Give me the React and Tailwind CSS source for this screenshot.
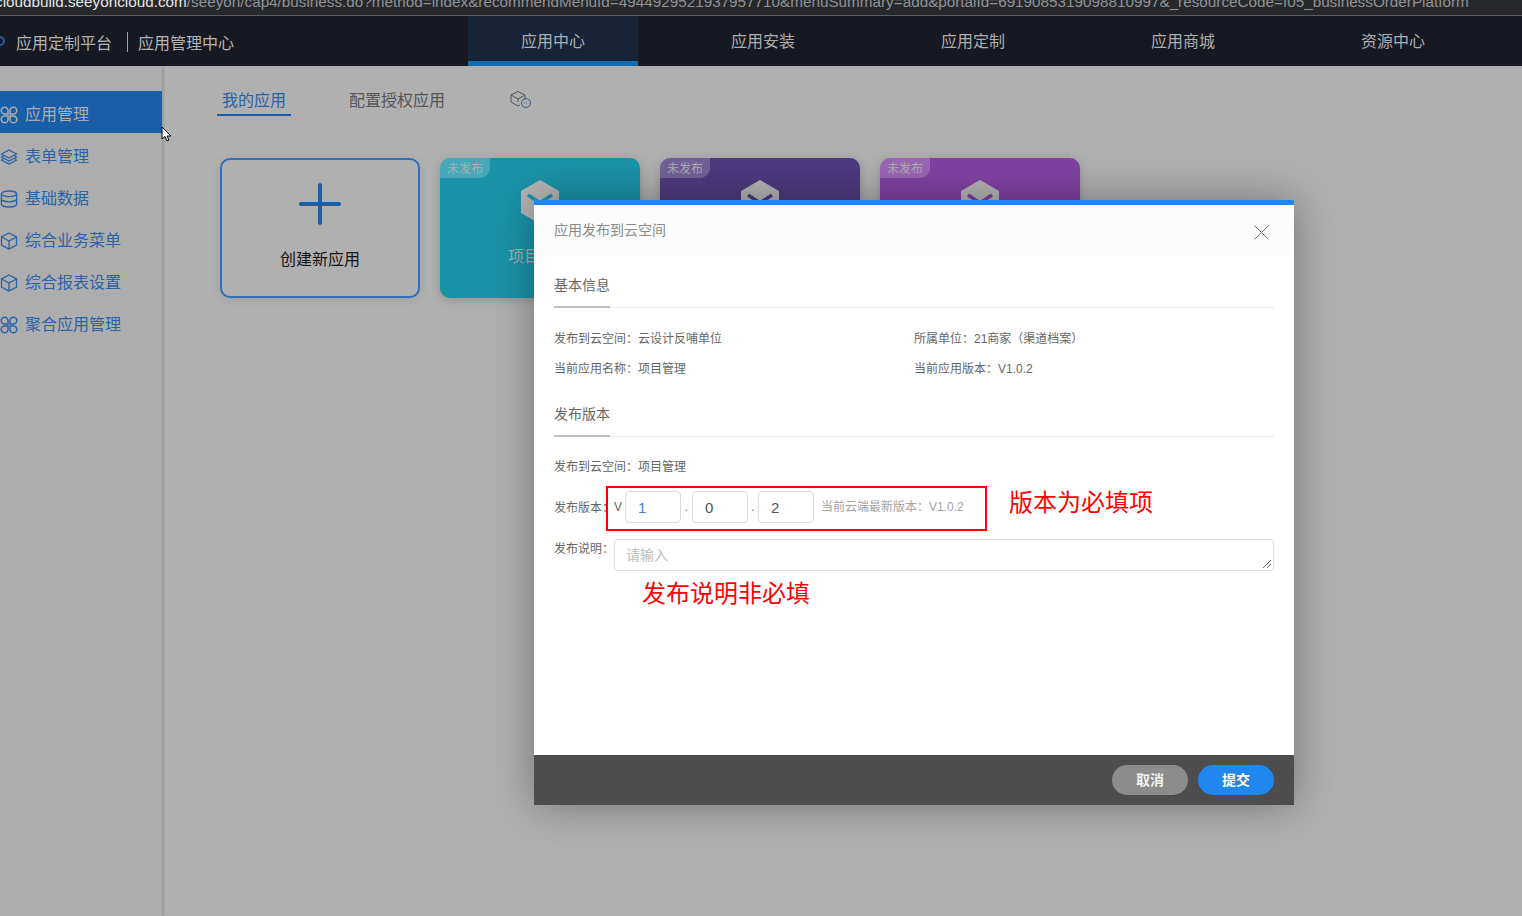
import React from "react";

const FONT = "font-['Liberation_Sans','Noto_Sans_CJK_SC',sans-serif]";

const navItems = ["应用中心", "应用安装", "应用定制", "应用商城", "资源中心"];

// clover style icon used for the app menu rows
const CloverIcon = () => (
  <svg width="18" height="18" viewBox="0 0 18 18" fill="none" stroke="currentColor" strokeWidth="1.5">
    <path d="M8 8H4.6A3.4 3.4 0 1 1 8 4.6zM10 8h3.4A3.4 3.4 0 1 0 10 4.6zM8 10H4.6A3.4 3.4 0 1 0 8 13.4zM10 10h3.4A3.4 3.4 0 1 1 10 13.4z" />
  </svg>
);

const LayersIcon = () => (
  <svg width="18" height="18" viewBox="0 0 18 18" fill="none" stroke="currentColor" strokeWidth="1.2">
    <path d="M9 2 16.5 6 9 10 1.5 6z" />
    <path d="M3.5 7.2 1.5 9 9 13l7.5-4-2-1.8" />
    <path d="M3.5 10.2 1.5 12 9 16l7.5-4-2-1.8" />
  </svg>
);

const DbIcon = () => (
  <svg width="18" height="18" viewBox="0 0 18 18" fill="none" stroke="currentColor" strokeWidth="1.3">
    <ellipse cx="9" cy="3.8" rx="7.6" ry="2.8" />
    <path d="M1.4 3.8v10.4c0 1.5 3.4 2.8 7.6 2.8s7.6-1.3 7.6-2.8V3.8" />
    <path d="M1.4 9c0 1.5 3.4 2.8 7.6 2.8s7.6-1.3 7.6-2.8" />
  </svg>
);

const BoxIcon = () => (
  <svg width="18" height="18" viewBox="0 0 18 18" fill="none" stroke="currentColor" strokeWidth="1.3">
    <path d="M9 1 16.5 5v8.2L9 17l-7.5-3.8V5z" />
    <path d="M1.5 5 9 9l7.5-4M9 9v8" />
  </svg>
);

const menuItems = [
  { label: "应用管理", Icon: CloverIcon, active: true },
  { label: "表单管理", Icon: LayersIcon },
  { label: "基础数据", Icon: DbIcon },
  { label: "综合业务菜单", Icon: BoxIcon },
  { label: "综合报表设置", Icon: BoxIcon },
  { label: "聚合应用管理", Icon: CloverIcon },
];

// white hexagon logo on the app cards
const CubeLogo = ({ color }) => (
  <svg width="38" height="44" viewBox="0 0 38 44" className="block">
    <path d="M19 0 38 11v22L19 44 0 33V11z" fill="#b4b4b4" />
    <path d="M7 15 19 23 31 15" fill="none" stroke={color} strokeWidth="3.5" />
  </svg>
);

const AppCard = ({ bg, color, title }) => (
  <div className={`relative w-[200px] h-[140px] rounded-[10px] overflow-hidden flex flex-col items-center pt-[22px] shadow-[0_2px_10px_rgba(0,0,0,0.18)] ${bg}`}>
    <div className="absolute left-0 top-0 w-[50px] h-5 bg-[#ffffff33] rounded-br-[10px] pl-[7px] text-xs leading-[22px] text-[#adadad]">
      未发布
    </div>
    <CubeLogo color={color} />
    <div className="mt-[23px] text-base leading-5 text-[#adadad]">{title}</div>
  </div>
);

const SectionTitle = ({ children }) => (
  <div className="border-b border-[#ebebeb] h-[33px]">
    <div className="inline-block h-[33px] border-b-2 border-[#bdbdbd] text-sm leading-5 text-[#666]">
      {children}
    </div>
  </div>
);

const VersionInput = ({ value, blue }) => (
  <div className={`w-14 h-8 border border-[#dcdcdc] rounded-[4px] pl-3 text-[15px] leading-[31px] ${blue ? "text-[#3b82c4]" : "text-[#555]"}`}>
    {value}
  </div>
);

export default function App() {
  return (
    <div className={`${FONT} relative w-[1522px] h-[916px] overflow-hidden bg-[#b0b0b0]`}>
      {/* Browser address bar */}
      <div className="h-4 bg-[#27282b] border-b border-[#5c5c5c] overflow-hidden">
        <div className="-mt-[7px] -ml-[5px] whitespace-nowrap text-[15.27px] leading-[18px] text-[#8f9296]">
          <span className="text-[#e4e4e4]">cloudbuild.seeyoncloud.com</span>
          /seeyon/cap4/business.do?method=index&amp;recommendMenuId=4944929521937957710&amp;menuSummary=add&amp;portalId=6919085319098810997&amp;_resourceCode=f05_businessOrderPlatform
        </div>
      </div>

      {/* Navbar */}
      <nav className="h-[50px] bg-[#161922] flex">
        <div className="w-[468px] flex items-center text-[#b4b4b4] text-base pt-1.5">
          <div className="w-[5px] h-2.5 -mt-1.5 mr-[11px] rounded-r-full border-2 border-l-0 border-[#185ea8]" />
          <span>应用定制平台</span>
          <span className="w-px h-5 bg-[#a0a0a0] ml-[15px] mr-[10px] -mt-1" />
          <span>应用管理中心</span>
        </div>
        {navItems.map((item, i) => (
          <div
            key={item}
            className={`w-[170px] mr-10 last:mr-0 flex items-center justify-center text-base text-[#adadad] ${
              i === 0 ? "bg-[#172438] border-b-[5px] border-[#0f6cb5] pt-[7px]" : "pt-0.5"
            }`}
          >
            {item}
          </div>
        ))}
      </nav>

      <div className="flex h-[850px]">
        {/* Sidebar */}
        <aside className="w-[162px] h-full pt-[25px] bg-[#adadad] shadow-[1px_0_3px_rgba(0,0,0,0.2)] shrink-0">
          {menuItems.map(({ label, Icon, active }) => (
            <div
              key={label}
              className={`h-[42px] pt-1.5 flex items-center text-base ${active ? "bg-[#185ea8] text-[#adadad]" : "text-[#2a63a8]"}`}
            >
              <span className="w-[25px] shrink-0 flex">
                <Icon />
              </span>
              {label}
            </div>
          ))}
        </aside>

        {/* Main content */}
        <main className="flex-1 pl-[55px] pt-[23px]">
          <div className="flex items-start h-[69px] text-base">
            <div className="w-[74px] h-[27px] border-b-2 border-[#185ea8] text-center text-[#2a63a8] leading-6">我的应用</div>
            <div className="ml-[58px] text-[#555] leading-6">配置授权应用</div>
            <svg className="ml-[64px] mt-px" width="24" height="20" viewBox="0 0 24 20" fill="none" stroke="#555" strokeWidth="1">
              <path d="M9 1.5 16 5v5M2 5v7l7 4 2-1M2 5l7-3.5M2 5l7 4 6-3.5M9 9v3" />
              <circle cx="17" cy="13" r="4.5" stroke="#3a5f8f" />
              <path d="M15 13h4" stroke="#3a5f8f" strokeDasharray="1 1" />
            </svg>
          </div>
          <div className="flex gap-5 ml-[3px]">
            <div className="w-[200px] h-[140px] rounded-[10px] border-2 border-[#2f72bb] flex flex-col items-center pt-[23px] shadow-[0_2px_8px_rgba(0,0,0,0.1)]">
              <svg width="42" height="42" viewBox="0 0 42 42" stroke="#185ea8" strokeWidth="4" strokeLinecap="round" className="block">
                <path d="M21 2v38M2 21h38" />
              </svg>
              <div className="mt-[25px] text-base leading-5 text-[#141414]">创建新应用</div>
            </div>
            <AppCard bg="bg-[#1a93a8]" color="#1a93a8" title="项目管理" />
            <AppCard bg="bg-[#4e3a80]" color="#4e3a80" title="项目" />
            <AppCard bg="bg-[#8142a3]" color="#8142a3" title="项目" />
          </div>
        </main>
      </div>

      {/* Mouse pointer */}
      <svg className="absolute left-[161px] top-[126px]" width="12" height="17" viewBox="0 0 12 17">
        <path d="M1 1v12l3-2.5L6 15l2-1-2-4h4z" fill="#fff" stroke="#000" strokeWidth="1" />
      </svg>

      {/* Publish dialog */}
      <div className="absolute left-[534px] top-[200px] w-[760px] h-[605px] bg-white flex flex-col shadow-[0_0_40px_rgba(0,0,0,0.35)]">
        <div className="h-[55px] shrink-0 bg-[#fcfcfc] border-t-[5px] border-[#2087ee] px-5 flex items-center justify-between">
          <span className="text-sm text-[#8a8a8a]">应用发布到云空间</span>
          <svg className="mr-[5px] mt-1" width="15" height="15" viewBox="0 0 15 15" stroke="#777" strokeWidth="1">
            <path d="M0.5 0.5 14.5 14.5M14.5 0.5 0.5 14.5" />
          </svg>
        </div>

        <div className="flex-1 px-5 pt-5 text-xs text-[#666]">
          <SectionTitle>基本信息</SectionTitle>
          <div className="grid grid-cols-[360px_1fr] gap-y-3 mt-[22px] leading-[18px]">
            <div>发布到云空间：云设计反哺单位</div>
            <div>所属单位：21商家（渠道档案）</div>
            <div>当前应用名称：项目管理</div>
            <div>当前应用版本：V1.0.2</div>
          </div>

          <div className="mt-[26px]">
            <SectionTitle>发布版本</SectionTitle>
          </div>
          <div className="mt-[21px] leading-[18px]">发布到云空间：项目管理</div>

          <div className="flex items-center mt-[15px] h-8">
            <span className="w-[60px] shrink-0 pt-[2px]">发布版本：</span>
            <span className="w-[11px] shrink-0 -mt-px">V</span>
            <VersionInput value="1" blue />
            <span className="w-[11px] text-center">.</span>
            <VersionInput value="0" />
            <span className="w-[10px] text-center">.</span>
            <VersionInput value="2" />
            <span className="ml-[7px] -mt-px text-[#a3a3a3]">当前云端最新版本：V1.0.2</span>
          </div>

          <div className="flex mt-4">
            <span className="w-[60px] shrink-0 leading-[21px]">发布说明：</span>
            <div className="relative flex-1 h-8 border border-[#dcdcdc] rounded-[4px] pl-[11px] text-sm leading-[30px] text-[#bdbdbd]">
              请输入
              <svg className="absolute right-0.5 bottom-0.5" width="9" height="9" viewBox="0 0 9 9" stroke="#666" strokeWidth="1">
                <path d="M1 9 9 1M5 9l4-4" />
              </svg>
            </div>
          </div>
        </div>

        <div className="h-[50px] shrink-0 bg-[#4d4d4d] flex items-center justify-end gap-2.5 pr-5">
          <div className="w-[76px] h-[30px] rounded-full bg-[#8c8c8c] text-sm font-bold text-[#f2f2f2] flex items-center justify-center">取消</div>
          <div className="w-[76px] h-[30px] rounded-full bg-[#2087ee] text-sm font-bold text-white flex items-center justify-center">提交</div>
        </div>
      </div>

      {/* Red annotations drawn over the screenshot */}
      <div className="absolute left-[606px] top-[486px] w-[381px] h-[45px] border-2 border-[#ff0000]" />
      <div className="absolute left-[1009px] top-[487px] text-2xl leading-8 text-[#ff0000]">版本为必填项</div>
      <div className="absolute left-[642px] top-[578px] text-2xl leading-8 text-[#ff0000]">发布说明非必填</div>
    </div>
  );
}
